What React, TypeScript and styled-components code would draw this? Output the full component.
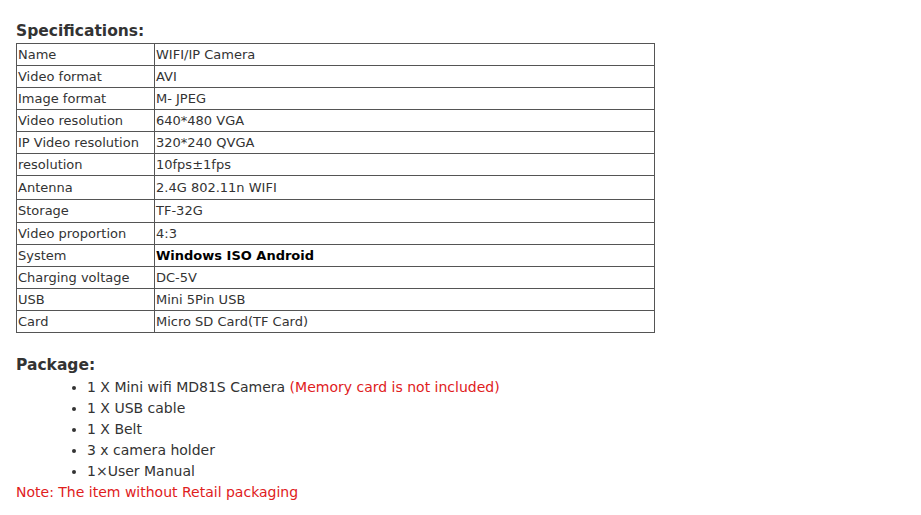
import React from "react";
import styled, { createGlobalStyle } from "styled-components";

const GlobalStyle = createGlobalStyle`
	html,
	body {
		margin: 0;
		padding: 0;
		background: #ffffff;
	}
	body {
		font-family: "DejaVu Sans", Verdana, sans-serif;
		font-size: 13px;
		color: #333333;
	}
`;

const specs: { name: string; value: string; bold?: boolean; height?: number }[] = [
	{ name: "Name", value: "WIFI/IP Camera" },
	{ name: "Video format", value: "AVI" },
	{ name: "Image format", value: "M- JPEG" },
	{ name: "Video resolution", value: "640*480 VGA" },
	{ name: "IP Video resolution", value: "320*240 QVGA" },
	{ name: "resolution", value: "10fps±1fps" },
	{ name: "Antenna", value: "2.4G 802.11n WIFI", height: 24 },
	{ name: "Storage", value: "TF-32G", height: 23 },
	{ name: "Video proportion", value: "4:3" },
	{ name: "System", value: "Windows ISO Android", bold: true },
	{ name: "Charging voltage", value: "DC-5V" },
	{ name: "USB", value: "Mini 5Pin USB" },
	{ name: "Card", value: "Micro SD Card(TF Card)" },
];

export default function App() {
	return (
		<Page>
			<GlobalStyle />
			<Heading>Specifications:</Heading>
			<SpecTable>
				<tbody>
					{specs.map((row) => (
						<Row key={row.name} h={row.height ?? 22}>
							<NameCell>{row.name}</NameCell>
							<ValueCell bold={row.bold}>{row.value}</ValueCell>
						</Row>
					))}
				</tbody>
			</SpecTable>

			<PackageHeading>Package:</PackageHeading>
			<List>
				<Item>
					1 X Mini wifi MD81S Camera <Red>(Memory card is not included)</Red>
				</Item>
				<Item>1 X USB cable</Item>
				<Item>1 X Belt</Item>
				<Item>3 x camera holder</Item>
				<Item>1×User Manual</Item>
			</List>
			<Note>Note: The item without Retail packaging</Note>
		</Page>
	);
}

const Page = styled.div`
	width: 921px;
	height: 515px;
	padding: 21px 0 0 16px;
	box-sizing: border-box;
	overflow: hidden;
`;

const Heading = styled.h3`
	margin: 0 0 2px 0;
	font-size: 15.5px;
	font-weight: bold;
	line-height: 20px;
	color: #333333;
`;

const PackageHeading = styled(Heading)`
	margin: 22px 0 2px 0;
`;

const SpecTable = styled.table`
	width: 639px;
	border-collapse: collapse;
	border: 1px solid #555555;
`;

const Row = styled.tr<{ h: number }>`
	height: ${(props) => props.h}px;
`;

const NameCell = styled.td`
	width: 136px;
	padding: 0 0 0 1px;
	border: 1px solid #555555;
	font-size: 13px;
	line-height: 18px;
	vertical-align: middle;
`;

const ValueCell = styled(NameCell)<{ bold?: boolean }>`
	width: auto;
	font-weight: ${(props) => (props.bold ? "bold" : "normal")};
	color: ${(props) => (props.bold ? "#000000" : "#333333")};
`;

const List = styled.ul`
	margin: 0;
	padding: 0 0 0 71px;
	list-style: disc;
`;

const Item = styled.li`
	font-size: 14px;
	line-height: 21px;
	color: #333333;
`;

const Red = styled.span`
	color: #e0201c;
`;

const Note = styled.div`
	font-size: 14px;
	line-height: 21px;
	color: #e0201c;
`;
